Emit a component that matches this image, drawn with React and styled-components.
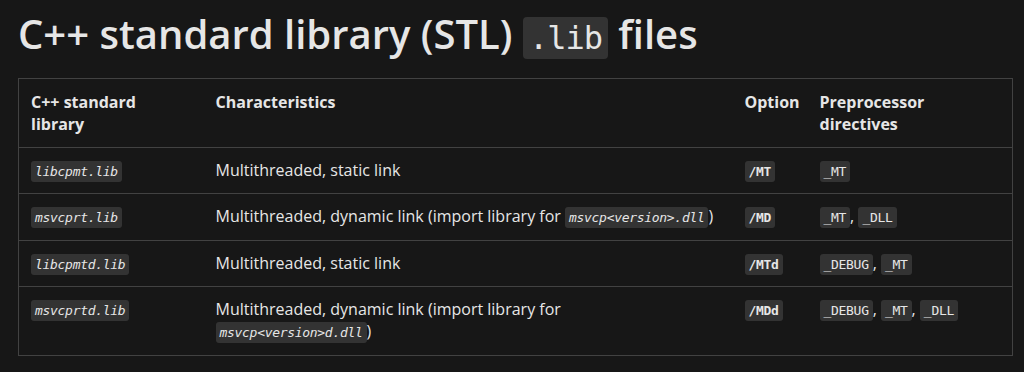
import React from "react";
import styled, { createGlobalStyle } from "styled-components";

const GlobalStyle = createGlobalStyle`
  html, body {
    margin: 0;
    padding: 0;
    background: #171717;
  }
  body {
    font-family: "Open Sans", "Noto Sans", sans-serif;
    color: #e6e6e6;
  }
`;

const Page = styled.main`
  padding: 8px 12px 0 18px;
`;

const Title = styled.h1`
  margin: 0 0 14px;
  font-size: 40px;
  font-weight: 600;
  line-height: 52px;
  letter-spacing: 0;
  color: #e6e6e6;
`;

const Code = styled.code`
  font-family: "DejaVu Sans Mono", "Liberation Mono", monospace;
  font-size: ${({ $big }) => ($big ? "32px" : "13px")};
  font-style: ${({ $italic }) => ($italic ? "italic" : "normal")};
  font-weight: ${({ $bold }) => ($bold ? 700 : 400)};
  letter-spacing: ${({ $big }) => ($big ? "-1px" : "-0.3px")};
  background: #333333;
  color: #e6e6e6;
  border-radius: ${({ $big }) => ($big ? "4px" : "3px")};
  padding: ${({ $big }) => ($big ? "2px 6px" : "3px 4px")};
`;

const Table = styled.table`
  width: 994px;
  table-layout: fixed;
  border-collapse: collapse;
  border: 1px solid #424242;
  font-size: 16px;
  line-height: 1.4;
`;

const Th = styled.th`
  text-align: left;
  vertical-align: top;
  font-weight: 700;
  padding: 12px 12px 11px;
  border-bottom: 1px solid #424242;
`;

const Td = styled.td`
  vertical-align: top;
  padding: 11px 12px 12px;
  border-top: 1px solid #424242;
`;

const rows = [
  {
    lib: "libcpmt.lib",
    desc: "Multithreaded, static link",
    opt: "/MT",
    defs: ["_MT"],
  },
  {
    lib: "msvcprt.lib",
    desc: "Multithreaded, dynamic link (import library for ",
    dll: "msvcp<version>.dll",
    opt: "/MD",
    defs: ["_MT", "_DLL"],
  },
  {
    lib: "libcpmtd.lib",
    desc: "Multithreaded, static link",
    opt: "/MTd",
    defs: ["_DEBUG", "_MT"],
  },
  {
    lib: "msvcprtd.lib",
    desc: "Multithreaded, dynamic link (import library for ",
    dll: "msvcp<version>d.dll",
    opt: "/MDd",
    defs: ["_DEBUG", "_MT", "_DLL"],
  },
];

export default function App() {
  return (
    <>
      <GlobalStyle />
      <Page>
        <Title>
          C++ standard library (STL) <Code $big>.lib</Code> files
        </Title>
        <Table>
          <colgroup>
            <col style={{ width: "185px" }} />
            <col style={{ width: "529px" }} />
            <col style={{ width: "75px" }} />
            <col style={{ width: "205px" }} />
          </colgroup>
          <thead>
            <tr>
              <Th>C++ standard library</Th>
              <Th>Characteristics</Th>
              <Th>Option</Th>
              <Th>Preprocessor directives</Th>
            </tr>
          </thead>
          <tbody>
            {rows.map((r) => (
              <tr key={r.lib}>
                <Td>
                  <Code $italic>{r.lib}</Code>
                </Td>
                <Td>
                  {r.desc}
                  {r.dll && (
                    <>
                      <Code $italic>{r.dll}</Code>)
                    </>
                  )}
                </Td>
                <Td>
                  <Code $bold>{r.opt}</Code>
                </Td>
                <Td>
                  {r.defs.map((d, i) => (
                    <React.Fragment key={d}>
                      {i > 0 && ", "}
                      <Code>{d}</Code>
                    </React.Fragment>
                  ))}
                </Td>
              </tr>
            ))}
          </tbody>
        </Table>
      </Page>
    </>
  );
}
